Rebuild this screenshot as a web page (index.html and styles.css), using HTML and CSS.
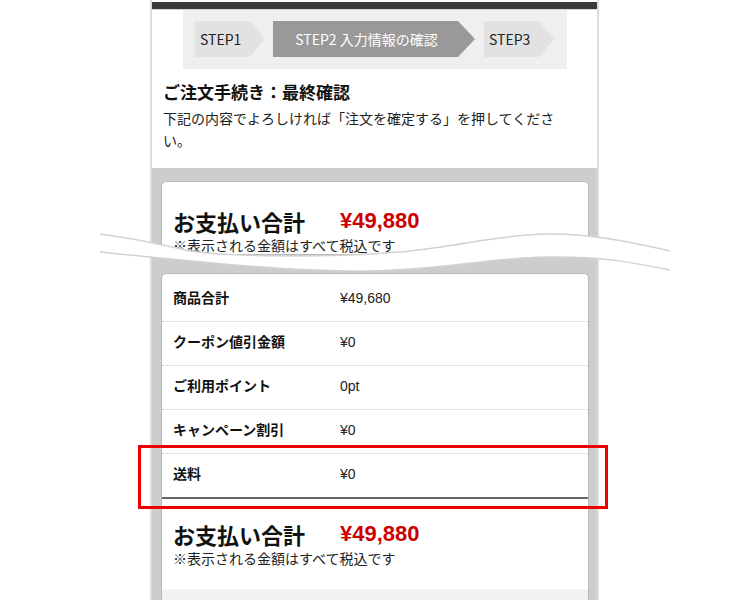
FILE: index.html
```html
<!DOCTYPE html>
<html lang="ja">
<head>
    <meta charset="UTF-8">
    <meta name="viewport" content="width=device-width, initial-scale=1.0">
    <title>ご注文手続き：最終確認</title>
    <link rel="stylesheet" href="styles.css">
</head>
<body>
    <div class="phone">
        <div class="topbar"></div>
        <div class="steps">
            <div class="step">STEP1</div>
            <div class="step current">STEP2 入力情報の確認</div>
            <div class="step">STEP3</div>
        </div>
        <div class="intro">
            <h1>ご注文手続き：最終確認</h1>
            <p>下記の内容でよろしければ「注文を確定する」を押してください。</p>
        </div>
        <div class="summary">
            <div class="card card-top">
                <div class="total-line">
                    <span class="total-label">お支払い合計</span>
                    <span class="total-price">¥49,880</span>
                </div>
                <p class="tax-note">※表示される金額はすべて税込です</p>
            </div>
            <div class="card">
                <div class="rows">
                    <div class="row"><span class="row-label">商品合計</span><span class="row-value">¥49,680</span></div>
                    <div class="row"><span class="row-label">クーポン値引金額</span><span class="row-value">¥0</span></div>
                    <div class="row"><span class="row-label">ご利用ポイント</span><span class="row-value">0pt</span></div>
                    <div class="row"><span class="row-label">キャンペーン割引</span><span class="row-value">¥0</span></div>
                    <div class="row"><span class="row-label">送料</span><span class="row-value">¥0</span></div>
                </div>
                <div class="totals">
                    <div class="total-line">
                        <span class="total-label">お支払い合計</span>
                        <span class="total-price">¥49,880</span>
                    </div>
                    <p class="tax-note">※表示される金額はすべて税込です</p>
                </div>
                <div class="next-box"></div>
            </div>
        </div>
        <!-- red marker around the shipping row -->
        <div class="highlight"></div>
    </div>

    <!-- torn paper cut between the two screenshots -->
    <svg class="cut" width="570" height="55" viewBox="100 225 570 55">
        <path d="M100,234 C130,238 160,244 185,250 C220,257 330,258 400,252 C460,246 500,235 545,234 C590,233 630,242 670,251
                 L670,270 C630,262 600,256 545,257 C490,258 440,270 370,271 C290,272 200,262 100,252 Z"
              fill="#fff"/>
        <path d="M100,234 C130,238 160,244 185,250 C220,257 330,258 400,252 C460,246 500,235 545,234 C590,233 630,242 670,251"
              fill="none" stroke="#d2d2d2" stroke-width="1.5"/>
        <path d="M100,252 C200,262 290,272 370,271 C440,270 490,258 545,257 C600,256 630,262 670,270"
              fill="none" stroke="#d2d2d2" stroke-width="1.5"/>
    </svg>
</body>
</html>
```

FILE: styles.css
```css
body {
    margin: 0;
    height: 600px;
    overflow: hidden;
    position: relative;
    background-color: #fff;
    font-family: "Liberation Sans", "Noto Sans CJK JP", sans-serif;
    color: #222;
}
.phone {
    position: relative;
    width: 449px;
    height: 600px;
    margin: 0 auto;
    padding-top: 2px;
    box-sizing: border-box;
    border-left: 2px solid #dcdcdc;
    border-right: 2px solid #dcdcdc;
    background-color: #fff;
}
.topbar {
    height: 7px;
    background-color: #3a3a3a;
    border-bottom: 1px solid #d6d6d6;
}
.steps {
    display: flex;
    margin: 0 30px 0 31px;
    padding: 11px 12px;
    height: 59px;
    box-sizing: border-box;
    background-color: #efefef;
}
.step {
    height: 36px;
    line-height: 36px;
    width: 70px;
    padding-left: 5px;
    box-sizing: border-box;
    font-family: "Noto Sans CJK JP", sans-serif;
    font-size: 14px;
    color: #222;
    background-color: #e2e2e2;
    clip-path: polygon(0 0, calc(100% - 15px) 0, 100% 50%, calc(100% - 15px) 100%, 0 100%);
}
.step.current {
    width: 202px;
    margin: 0 9px 0 8px;
    padding: 0 15px 0 0;
    text-align: center;
    color: #fff;
    background-color: #999;
    clip-path: polygon(0 0, calc(100% - 17px) 0, 100% 50%, calc(100% - 17px) 100%, 0 100%);
}
.intro {
    padding: 11px 34px 17px 11px;
}
.intro h1 {
    margin: 0 0 3px;
    font-family: "Noto Sans CJK JP", sans-serif;
    font-size: 17px;
    line-height: 24px;
    color: #111;
}
.intro p {
    margin: 0;
    font-family: "Noto Sans CJK JP", sans-serif;
    font-size: 14px;
    line-height: 22px;
    color: #222;
}
.summary {
    background-color: #cdcdcd;
    padding: 13px 8px 0 9px;
    height: 432px;
    box-sizing: border-box;
}
.card {
    background-color: #fff;
    border: 1px solid #b8b8b8;
    border-radius: 5px;
}
.card-top {
    height: 74px;
    box-sizing: border-box;
    overflow: hidden;
    padding: 24px 11px 0;
    margin-bottom: 18px;
}
.total-line {
    display: flex;
    align-items: center;
    height: 30px;
}
.total-label {
    width: 167px;
    font-family: "Noto Sans CJK JP", sans-serif;
    font-size: 22px;
    font-weight: bold;
    color: #111;
}
.total-price {
    font-size: 22px;
    font-weight: bold;
    color: #cc0000;
}
.tax-note {
    margin: 0;
    font-size: 14px;
    line-height: 20px;
    color: #222;
}
.rows {
    padding-top: 4px;
    border-bottom: 2px solid #666;
}
.row {
    display: flex;
    padding: 10px 11px 13px;
    line-height: 20px;
    font-size: 14px;
    border-bottom: 1px dotted #c8c8c8;
}
.row:last-child {
    border-bottom: none;
}
.row-label {
    width: 167px;
    font-weight: bold;
    color: #111;
}
.row-value {
    color: #222;
}
.totals {
    padding: 20px 11px 0;
}
.next-box {
    margin-top: 20px;
    height: 30px;
    background-color: #f2f2f2;
}
.highlight {
    position: absolute;
    left: -14px;
    top: 445px;
    width: 470px;
    height: 64px;
    box-sizing: border-box;
    border: 3px solid #ee0000;
}
.cut {
    position: absolute;
    left: 100px;
    top: 225px;
}
```
